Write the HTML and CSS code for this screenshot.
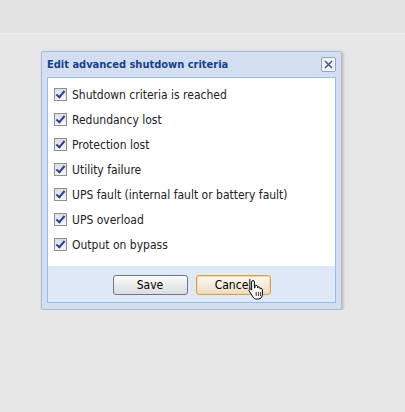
FILE: index.html
```html
<!DOCTYPE html>
<html>
<head>
    <title>Edit advanced shutdown criteria</title>
    <link rel="stylesheet" href="styles.css">
</head>
<body>
<div class="topbar"></div>

<div class="window">
    <div class="header">
        <span class="title">Edit advanced shutdown criteria</span>
        <span class="close">
            <svg width="9" height="9" viewBox="0 0 9 9"><path d="M1 1L8 8M8 1L1 8" stroke="#4a5a78" stroke-width="1.6"/></svg>
        </span>
    </div>

    <div class="body">
        <label class="row"><span class="check"></span>Shutdown criteria is reached</label>
        <label class="row"><span class="check"></span>Redundancy lost</label>
        <label class="row"><span class="check"></span>Protection lost</label>
        <label class="row"><span class="check"></span>Utility failure</label>
        <label class="row"><span class="check"></span>UPS fault (internal fault or battery fault)</label>
        <label class="row"><span class="check"></span>UPS overload</label>
        <label class="row"><span class="check"></span>Output on bypass</label>
    </div>

    <div class="footer">
        <button class="btn">Save</button>
        <button class="btn hover">Cancel
            <svg class="pointer" width="16" height="22" viewBox="0 0 16 22">
                <path d="M5 1.5c.8 0 1.4.6 1.4 1.4V9l.6-.2V7.6c0-.8.6-1.2 1.3-1.2s1.3.5 1.3 1.2v1.2c.2-.6.7-.9 1.3-.9.7 0 1.2.5 1.2 1.2v1c.2-.4.6-.6 1.1-.6.7 0 1.2.5 1.2 1.2v4.6c0 2.6-1.6 4.7-4.2 4.7H8.4c-1.5 0-2.5-.7-3.3-1.9L1.2 12c-.4-.6-.2-1.3.3-1.7.6-.4 1.3-.3 1.7.2l.4.6V2.9c0-.8.6-1.4 1.4-1.4z" fill="#fff" stroke="#000" stroke-width="1"/>
                <path d="M8.2 13v4M10.4 13v4M12.6 13v4" stroke="#000" stroke-width="0.8"/>
            </svg>
        </button>
    </div>
</div>
</body>
</html>
```

FILE: styles.css
```css
* {
    box-sizing: border-box
}

body {
    margin: 0;
    background: #e7e7e7;
    font-family: "DejaVu Sans Condensed", "DejaVu Sans", sans-serif;
    font-size: 11px;
}

/* Strip at the top of the page */
.topbar {
    height: 34px;
    background: #e3e3e3;
    border-bottom: 1px solid #ededed;
}

/* Window frame */
.window {
    width: 301px;
    margin: 17px 0 0 41px;
    padding: 0 5px 6px 5px;
    background: #d3dff0;
    border: 1px solid #a9bcd8;
    border-radius: 2px;
    box-shadow: 1px 1px 3px rgba(0, 0, 0, 0.25);
}

.header {
    display: flex;
    align-items: center;
    justify-content: space-between;
    height: 25px;
}

.title {
    font-weight: bold;
    color: #15428b;
    font-size: 11px;
}

.close {
    display: flex;
    align-items: center;
    justify-content: center;
    width: 15px;
    height: 15px;
    background: #f0f3f8;
    border: 1px solid #93a5c4;
    border-radius: 2px;
}

/* White area with the options */
.body {
    background: #fff;
    border: 1px solid #99bbe8;
    border-bottom: none;
    padding: 4px 0 9px 6px;
}

.row {
    display: flex;
    align-items: center;
    height: 25px;
    color: #222;
    font-size: 12px;
}

.check {
    position: relative;
    width: 13px;
    height: 13px;
    margin-right: 5px;
    border: 1px solid #8f8f8f;
    background: linear-gradient(#dedede, #f6f6f6);
}

.check::after {
    content: "";
    position: absolute;
    left: 3px;
    top: 0;
    width: 3px;
    height: 7px;
    border: solid #2a3f9c;
    border-width: 0 2px 2px 0;
    transform: rotate(40deg);
}

/* Button strip */
.footer {
    display: flex;
    justify-content: center;
    gap: 8px;
    padding: 9px 0 7px 0;
    background: #dfe8f6;
    border: 1px solid #99bbe8;
    border-top: none;
}

.btn {
    position: relative;
    width: 75px;
    height: 20px;
    padding: 0;
    font-family: "DejaVu Sans Condensed", "DejaVu Sans", sans-serif;
    font-size: 12px;
    color: #000;
    background: linear-gradient(#fdfdfd, #ebebeb 50%, #dcdcdc);
    border: 1px solid #6c7887;
    border-radius: 3px;
}

.btn.hover {
    background: linear-gradient(#fffaf0, #f4ecdc 50%, #e8dcc4);
    border-color: #d8a24a;
    box-shadow: inset 0 0 0 1px #f7d89a;
}

.pointer {
    position: absolute;
    left: 51px;
    top: 3px;
}
```
